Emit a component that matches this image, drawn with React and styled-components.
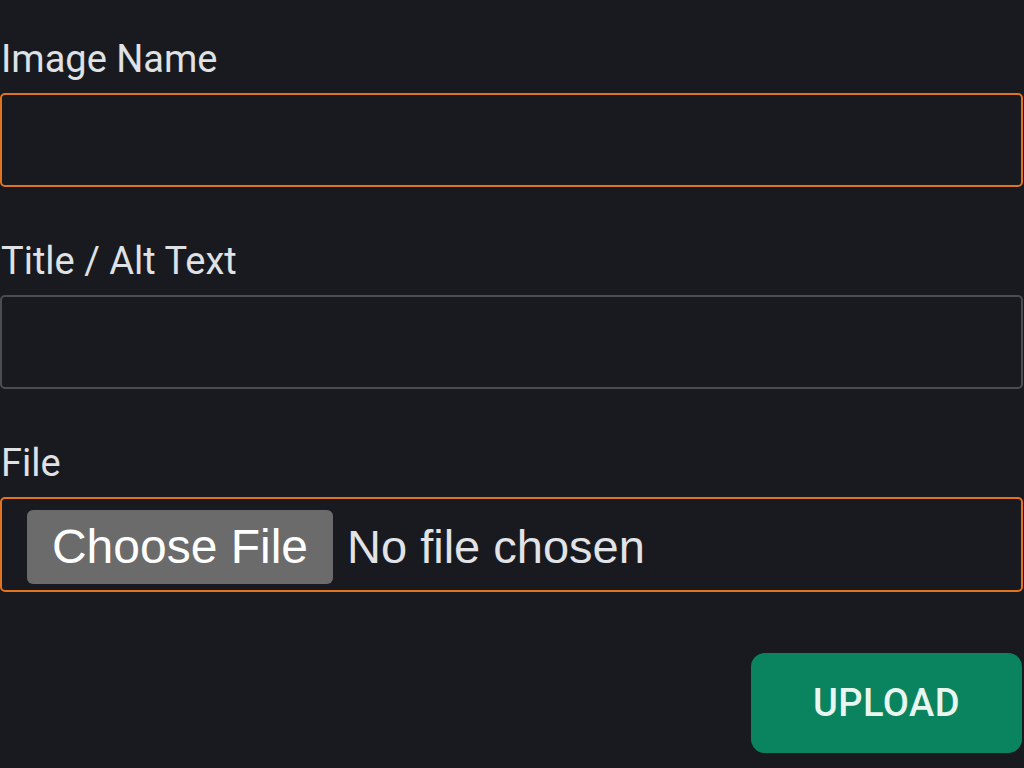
import React from "react";
import styled, { createGlobalStyle } from "styled-components";

const GlobalStyle = createGlobalStyle`
  html, body {
    margin: 0;
    padding: 0;
    background: #181a1f;
  }
  body {
    font-family: Roboto, "Noto Sans", Arial, sans-serif;
    color: #dfe1e5;
    overflow: hidden;
  }
  * { box-sizing: border-box; }
`;

const Form = styled.form`
  display: flex;
  flex-direction: column;
  width: 1023px;
  padding-top: 39px;
`;

const Field = styled.div`
  display: flex;
  flex-direction: column;
  gap: 14px;
  margin-bottom: 54px;
`;

const Label = styled.label`
  font-family: Roboto, sans-serif;
  font-size: 38px;
  line-height: 40px;
  color: #dfe1e5;
  padding-left: 1px;
`;

const TextInput = styled.input`
  display: block;
  width: 100%;
  height: 94px;
  margin: 0;
  padding: 0 24px;
  background: #181a1f;
  border: 2px solid ${(p) => (p.$focused ? "#e2731f" : "#4a4e54")};
  border-radius: 5px;
  color: #dfe1e5;
  font-family: Roboto, sans-serif;
  font-size: 38px;
  outline: none;
`;

const FileBox = styled.div`
  display: flex;
  align-items: center;
  gap: 14px;
  height: 95px;
  padding: 9px 25px 5px;
  border: 2px solid #e2731f;
  border-radius: 5px;
`;

const HiddenInput = styled.input`
  display: none;
`;

const ChooseButton = styled.label`
  display: flex;
  align-items: center;
  justify-content: center;
  width: 306px;
  height: 74px;
  background: #6b6b6b;
  border-radius: 6px;
  color: #ffffff;
  font-family: "Liberation Sans", Arial, sans-serif;
  font-size: 48px;
  cursor: pointer;
`;

const FileStatus = styled.span`
  font-family: "Liberation Sans", Arial, sans-serif;
  font-size: 47px;
  color: #e1e3e7;
`;

const Actions = styled.div`
  display: flex;
  justify-content: flex-end;
  padding-top: 7px;
  padding-right: 1px;
`;

const UploadButton = styled.button`
  width: 271px;
  height: 100px;
  border: none;
  border-radius: 14px;
  background: #0a845f;
  color: #e8f6ef;
  font-family: Roboto, sans-serif;
  font-weight: 500;
  font-size: 38px;
  letter-spacing: 0.5px;
  cursor: pointer;
`;

export default function App() {
  return (
    <>
      <GlobalStyle />
      <Form onSubmit={(e) => e.preventDefault()}>
        <Field>
          <Label htmlFor="imageName">Image Name</Label>
          <TextInput id="imageName" type="text" $focused />
        </Field>
        <Field>
          <Label htmlFor="altText">Title / Alt Text</Label>
          <TextInput id="altText" type="text" />
        </Field>
        <Field>
          <Label htmlFor="file">File</Label>
          <FileBox>
            <HiddenInput id="file" type="file" />
            <ChooseButton htmlFor="file">Choose File</ChooseButton>
            <FileStatus>No file chosen</FileStatus>
          </FileBox>
        </Field>
        <Actions>
          <UploadButton type="submit">UPLOAD</UploadButton>
        </Actions>
      </Form>
    </>
  );
}
